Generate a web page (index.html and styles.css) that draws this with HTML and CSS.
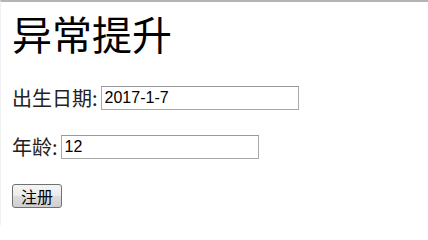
FILE: index.html
```html
<!DOCTYPE html>
<html lang="zh-CN">
<head>
<meta charset="utf-8">
<title>异常提升</title>
<link rel="stylesheet" href="styles.css">
</head>
<body>
<div class="page">
  <h1 class="title">异常提升</h1>
  <form class="form">
    <div class="row">
      <label class="label" for="birth">出生日期:</label>
      <input class="field" id="birth" type="text" value="2017-1-7">
    </div>
    <div class="row">
      <label class="label" for="age">年龄:</label>
      <input class="field" id="age" type="text" value="12">
    </div>
    <div class="row">
      <button class="btn" type="button">注册</button>
    </div>
  </form>
</div>
</body>
</html>
```

FILE: styles.css
```css
html, body {
  margin: 0;
  padding: 0;
  background: #ffffff;
}
body {
  width: 428px;
  height: 225px;
  box-sizing: border-box;
  border-top: 2px solid #b4b4b4;
  border-left: 1px solid #efefef;
  overflow: hidden;
}
.page {
  display: flex;
  flex-direction: column;
  padding: 11px 11px 0 11px;
}
.title {
  margin: 0 0 33px 0;
  font-family: "Noto Sans CJK SC", sans-serif;
  font-weight: normal;
  font-size: 40px;
  line-height: 40px;
  height: 40px;
  color: #000;
}
.form {
  display: flex;
  flex-direction: column;
  gap: 25px;
  margin: 0;
}
.row {
  display: flex;
  align-items: center;
  height: 24px;
}
.label {
  font-family: "Noto Sans CJK SC", sans-serif;
  font-size: 20px;
  line-height: 24px;
  color: #222;
  margin-right: 3px;
}
.field {
  box-sizing: border-box;
  width: 198px;
  height: 24px;
  margin: 0;
  padding: 0 3px;
  border: 1px solid #a9a9a9;
  border-top-color: #9a9a9a;
  border-radius: 0;
  font-family: "Liberation Sans", Arial, sans-serif;
  font-size: 16px;
  color: #000;
  background: #fff;
  outline: none;
}
.btn {
  box-sizing: border-box;
  width: 50px;
  height: 24px;
  margin: 0;
  padding: 0;
  border: 1px solid #707070;
  border-radius: 3px;
  background: linear-gradient(#f4f4f4 0%, #ebebeb 50%, #dddddd 51%, #cfcfcf 100%);
  font-family: "Noto Sans CJK SC", sans-serif;
  font-size: 16px;
  line-height: 20px;
  color: #000;
}
```
